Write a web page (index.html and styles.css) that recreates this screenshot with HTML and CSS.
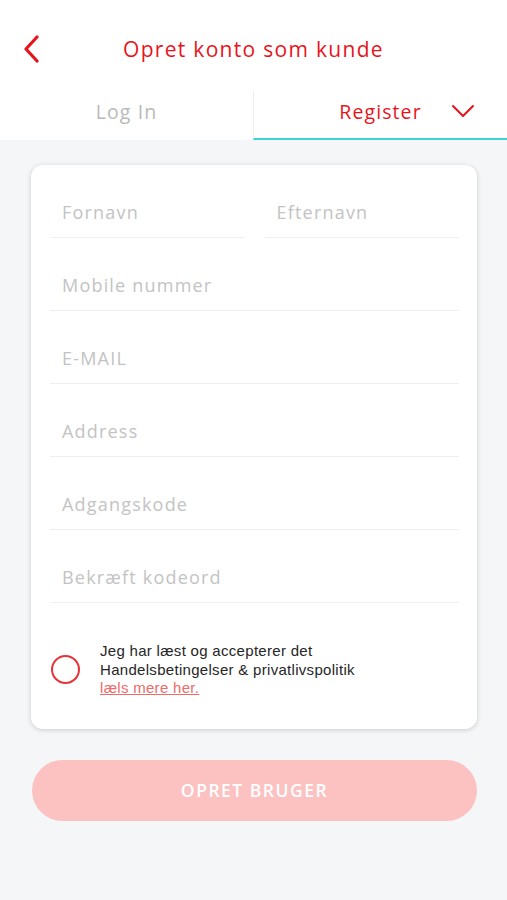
FILE: index.html
```html
<!DOCTYPE html>
<html lang="da">
<head>
<meta charset="utf-8">
<title>Opret konto som kunde</title>
<link rel="stylesheet" href="styles.css">
</head>
<body>
<div class="app">
  <header class="topbar">
    <button class="back" aria-label="Tilbage">
      <svg width="18" height="28" viewBox="0 0 18 28"><path d="M15 2 L4 14 L15 26" fill="none" stroke="#e8141b" stroke-width="3.2" stroke-linecap="round" stroke-linejoin="round"/></svg>
    </button>
    <h1 class="title">Opret konto som kunde</h1>
  </header>
  <nav class="tabs">
    <div class="tab">Log In</div>
    <div class="tab active">
      <span>Register</span>
      <svg class="chev" width="24" height="15" viewBox="0 0 24 15"><path d="M2 2 L12 12 L22 2" fill="none" stroke="#e8141b" stroke-width="2" stroke-linecap="round" stroke-linejoin="round"/></svg>
    </div>
  </nav>
  <main class="content">
    <form class="card">
      <div class="row two">
        <div class="field">Fornavn</div>
        <div class="field">Efternavn</div>
      </div>
      <div class="field">Mobile nummer</div>
      <div class="field">E-MAIL</div>
      <div class="field">Address</div>
      <div class="field">Adgangskode</div>
      <div class="field">Bekræft kodeord</div>
      <div class="terms">
        <span class="radio"></span>
        <div class="terms-text">
          <div>Jeg har læst og accepterer det</div>
          <div>Handelsbetingelser &amp; privatlivspolitik</div>
          <a class="link" href="#">læls mere her.</a>
        </div>
      </div>
    </form>
    <button class="submit" type="button">OPRET BRUGER</button>
  </main>
</div>
</body>
</html>
```
FILE: styles.css
```css
* { box-sizing: border-box; }
html, body { margin: 0; padding: 0; }
body {
  background: #f5f6f8;
  font-family: "Open Sans", "Noto Sans", sans-serif;
  width: 507px;
  height: 900px;
  overflow: hidden;
}
.app { display: flex; flex-direction: column; }
.topbar {
  background: #fff;
  height: 90px;
  display: flex;
  align-items: center;
  justify-content: center;
  position: relative;
  padding-top: 8px;
}
.back {
  position: absolute;
  left: 22px;
  top: 35px;
  border: 0;
  background: none;
  padding: 0;
  display: flex;
}
.title {
  margin: 0;
  font-size: 21px;
  font-weight: 400;
  color: #e8141b;
  letter-spacing: 1.3px;
}
.tabs {
  display: flex;
  background: #fff;
  height: 50px;
}
.tab {
  flex: 1;
  display: flex;
  align-items: center;
  justify-content: center;
  font-size: 19.5px;
  letter-spacing: 1.1px;
  color: #b9b9b9;
  padding-bottom: 8px;
}
.tab.active {
  color: #e8141b;
  border-left: 1px solid #efefef;
  border-bottom: 2px solid #3fcfd8;
  position: relative;
  padding-bottom: 6px;
}
.chev { position: absolute; right: 32px; top: 14px; }
.content {
  padding: 25px 30px 0 31px;
  display: flex;
  flex-direction: column;
  gap: 31px;
}
.card {
  margin: 0;
  background: #fff;
  border-radius: 12px;
  box-shadow: 0 1px 5px rgba(0,0,0,0.18);
  padding: 0 18px 31px 19px;
  display: flex;
  flex-direction: column;
}
.row.two { display: flex; gap: 20px; }
.row.two .field { flex: 1; }
.field {
  flex: none;
  height: 73px;
  padding: 35px 0 0 12px;
  font-size: 18px;
  line-height: 24px;
  letter-spacing: 1.2px;
  color: #c3c3c3;
  border-bottom: 1px solid #eeeeee;
}
.terms {
  display: flex;
  align-items: center;
  margin-top: 39px;
  gap: 20px;
}
.radio {
  width: 29px;
  height: 29px;
  border-radius: 50%;
  border: 2px solid #e8323a;
  margin-left: 1px;
  flex: none;
}
.terms-text {
  font-family: "Liberation Sans", Arial, sans-serif;
  font-size: 15px;
  letter-spacing: 0.3px;
  line-height: 18.5px;
  color: #262626;
}
.link { color: #f06a6a; text-decoration: underline; }
.submit {
  margin: 0 0 0 1px;
  height: 61px;
  border: 0;
  border-radius: 31px;
  background: #fcc1c1;
  color: #fff;
  font-family: "Open Sans", sans-serif;
  font-size: 17.5px;
  font-weight: 600;
  letter-spacing: 1.5px;
}
```
